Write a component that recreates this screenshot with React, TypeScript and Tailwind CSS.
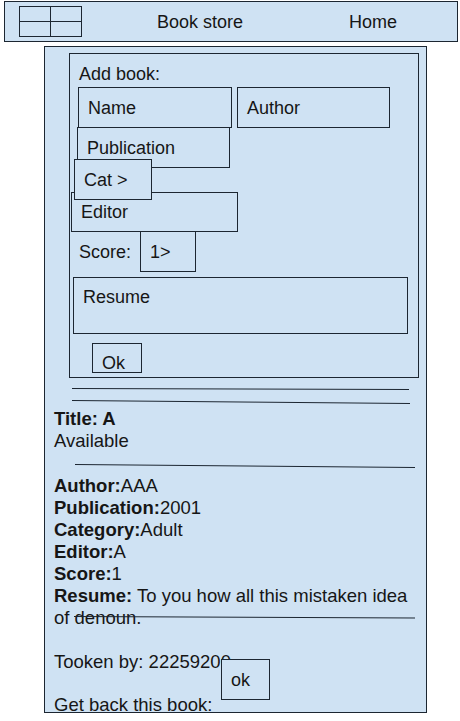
import React from 'react';

const line = 'border-[#1c2631]';
const field = 'border border-[#1c2631] bg-[#cfe2f3]';

function Detail({ label, value }: { label: string; value: string }) {
  return (
    <p>
      <b>{label}</b>
      {value}
    </p>
  );
}

export default function App() {
  return (
    <div className="relative h-[721px] w-[460px] overflow-hidden bg-white font-['Liberation_Sans',Arial,sans-serif] text-[18px] leading-[20px] text-[#161616]">
      <header className="ml-[4px] mt-[1px] flex h-[41px] w-[454px] items-center border border-[#1c2631] bg-[#cfe2f3]">
        <div className={`ml-[14px] grid h-[31px] w-[63px] grid-cols-2 grid-rows-2 border ${line}`}>
          <span className={`border-b border-r ${line}`} />
          <span className={`border-b ${line}`} />
          <span className={`border-r ${line}`} />
          <span />
        </div>
        <span className="ml-[75px] w-[192px]">Book store</span>
        <span>Home</span>
      </header>

      <main className="relative ml-[44px] mt-[4px] h-[667px] w-[383px] overflow-hidden border border-[#1c2631] bg-[#cfe2f3]">
        {/* add book form */}
        <section className={`ml-[24px] mt-[6px] h-[325px] w-[350px] border ${line}`}>
          <p className="ml-[9px] mt-[10px]">Add book:</p>
          <div className="mt-[3px] flex">
            <div className={`${field} ml-[8px] flex h-[41px] w-[154px] items-center pl-[9px]`}>Name</div>
            <div className={`${field} ml-[5px] flex h-[41px] w-[153px] items-center pl-[9px]`}>Author</div>
          </div>
          <div className={`${field} ml-[7px] mt-[-1px] flex h-[41px] w-[153px] items-center pl-[9px]`}>Publication</div>
          <div className={`${field} relative z-10 ml-[4px] mt-[-9px] flex h-[41px] w-[78px] items-center pl-[9px]`}>Cat &gt;</div>
          <div className={`${field} ml-[1px] mt-[-8px] flex h-[40px] w-[167px] items-center pl-[9px]`}>Editor</div>
          <div className="mt-[-1px] flex h-[41px] items-center">
            <span className="ml-[9px] w-[61px]">Score:</span>
            <div className={`${field} flex h-[41px] w-[56px] items-center pl-[9px]`}>1&gt;</div>
          </div>
          <div className={`${field} ml-[3px] mt-[5px] h-[57px] w-[335px] pl-[9px] pt-[9px]`}>Resume</div>
          <div className={`${field} ml-[22px] mt-[9px] h-[30px] w-[50px] pl-[9px] pt-[9px] leading-[20px]`}>Ok</div>
        </section>

        <svg className="ml-[27px] mt-[10px] block" width="340" height="17">
          <line x1="0" y1="0.5" x2="337" y2="1.5" stroke="#1c2631" strokeWidth="1" />
          <line x1="0" y1="12.5" x2="338" y2="15.5" stroke="#1c2631" strokeWidth="1" />
        </svg>

        {/* book detail */}
        <div className="mt-[3px] text-[18.5px] leading-[22px]">
          <div className="pl-[9px]">
            <p className="font-bold">Title: A</p>
            <p>Available</p>
          </div>
          <svg className="ml-[30px] mt-[12px] block" width="342" height="4">
            <line x1="0" y1="0.5" x2="340" y2="3.5" stroke="#1c2631" strokeWidth="1" />
          </svg>
          <div className="mt-[7px] pl-[9px]">
            <Detail label="Author:" value="AAA" />
            <Detail label="Publication:" value="2001" />
            <Detail label="Category:" value="Adult" />
            <Detail label="Editor:" value="A" />
            <Detail label="Score:" value="1" />
            <p>
              <b>Resume:</b> To you how all this mistaken idea
            </p>
          </div>
          <div className="relative pl-[9px]">
            <p>of denoun.</p>
            <svg className="absolute left-[29px] top-[9px]" width="342" height="4">
              <line x1="0" y1="0.5" x2="341" y2="2" stroke="#1c2631" strokeWidth="1" />
            </svg>
          </div>
          <p className="mt-[22px] pl-[9px]">Tooken by: 22259200</p>
          <p className="mt-[23px] pl-[9px] leading-[18px]">Get back this book:</p>
        </div>

        <button className={`${field} absolute left-[176px] top-[612px] flex h-[41px] w-[49px] items-center pl-[9px] text-[18px]`}>
          ok
        </button>
      </main>
    </div>
  );
}
